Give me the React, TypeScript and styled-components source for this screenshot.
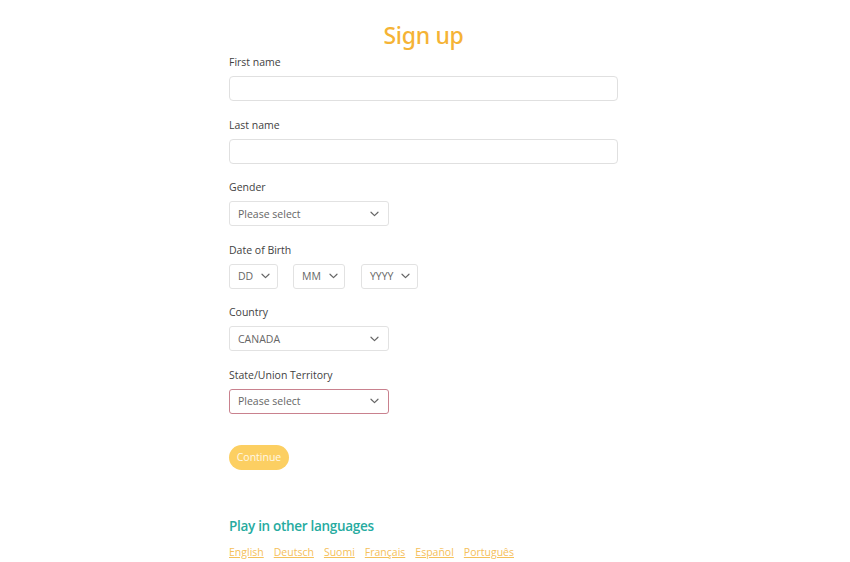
import React from "react";
import styled, { createGlobalStyle } from "styled-components";

const GlobalStyle = createGlobalStyle`
  body {
    margin: 0;
    background: #ffffff;
    font-family: "Open Sans", "Liberation Sans", sans-serif;
    color: #444444;
  }
`;

const Chevron = () => (
  <svg width="9" height="6" viewBox="0 0 9 6" fill="none">
    <path d="M1 1.2 L4.5 4.6 L8 1.2" stroke="#666" strokeWidth="1.2" strokeLinecap="round" strokeLinejoin="round" />
  </svg>
);

const languages = ["English", "Deutsch", "Suomi", "Français", "Español", "Português"];

const App = () => {
  return (
    <>
      <GlobalStyle />
      <Page>
        <Title>Sign up</Title>

        <Field>
          <Label>First name</Label>
          <TextInput />
        </Field>

        <Field>
          <Label>Last name</Label>
          <TextInput />
        </Field>

        <Field>
          <Label>Gender</Label>
          <Select width={160}>
            <span>Please select</span>
            <Chevron />
          </Select>
        </Field>

        <Field>
          <Label>Date of Birth</Label>
          <DateRow>
            <Select width={49}>
              <span>DD</span>
              <Chevron />
            </Select>
            <Select width={52}>
              <span>MM</span>
              <Chevron />
            </Select>
            <Select width={57}>
              <span>YYYY</span>
              <Chevron />
            </Select>
          </DateRow>
        </Field>

        <Field>
          <Label>Country</Label>
          <Select width={160}>
            <span>CANADA</span>
            <Chevron />
          </Select>
        </Field>

        <Field>
          <Label>State/Union Territory</Label>
          <Select width={160} $error>
            <span>Please select</span>
            <Chevron />
          </Select>
        </Field>

        <Button>Continue</Button>

        <Languages>
          <LangTitle>Play in other languages</LangTitle>
          <LangList>
            {languages.map((l) => (
              <LangLink key={l} href="#">
                {l}
              </LangLink>
            ))}
          </LangList>
        </Languages>
      </Page>
    </>
  );
};

export default App;

const Page = styled.div`
  width: 389px;
  margin-left: 229px;
  padding-top: 20px;
`;

const Title = styled.h1`
  margin: 0 0 5px;
  text-align: center;
  font-family: "Noto Sans", "Open Sans", sans-serif;
  font-weight: 500;
  font-size: 23px;
  line-height: 30px;
  color: #f5b335;
  letter-spacing: -0.3px;
`;

const Field = styled.div`
  margin-bottom: 16.5px;
`;

const Label = styled.div`
  font-size: 10.5px;
  line-height: 14px;
  margin-bottom: 7px;
  color: #3f3f3f;
`;

const TextInput = styled.input`
  display: block;
  box-sizing: border-box;
  width: 100%;
  height: 25px;
  border: 1px solid #e0e0e0;
  border-radius: 4px;
  outline: none;
  padding: 0 9px;
`;

const Select = styled.div<{ width: number; $error?: boolean }>`
  box-sizing: border-box;
  width: ${(p) => p.width}px;
  height: 25px;
  display: flex;
  align-items: center;
  justify-content: space-between;
  padding: 0 9px 0 8px;
  border: 1px solid ${(p) => (p.$error ? "#c9818e" : "#e2e2e2")};
  border-radius: 3px;
  font-size: 10.5px;
  color: #666666;

  svg {
    flex-shrink: 0;
    margin-left: 8px;
  }
`;

const DateRow = styled.div`
  display: flex;
  gap: 15px;

  & > :last-child {
    margin-left: 1px;
  }
`;

const Button = styled.button`
  display: block;
  margin-top: 31px;
  width: 60px;
  height: 25px;
  border: none;
  border-radius: 13px;
  background-color: #fccf62;
  color: #fff8e6;
  font-family: "Open Sans", sans-serif;
  font-size: 10.5px;
  padding: 0;
  cursor: pointer;
`;

const Languages = styled.div`
  margin-top: 46px;
`;

const LangTitle = styled.div`
  font-size: 13.5px;
  line-height: 20px;
  font-weight: 600;
  color: #26aba0;
  letter-spacing: -0.3px;
`;

const LangList = styled.div`
  display: flex;
  gap: 10px;
  margin-top: 9px;
`;

const LangLink = styled.a`
  font-size: 10.5px;
  color: #f5c05a;
  text-decoration: underline;
`;
